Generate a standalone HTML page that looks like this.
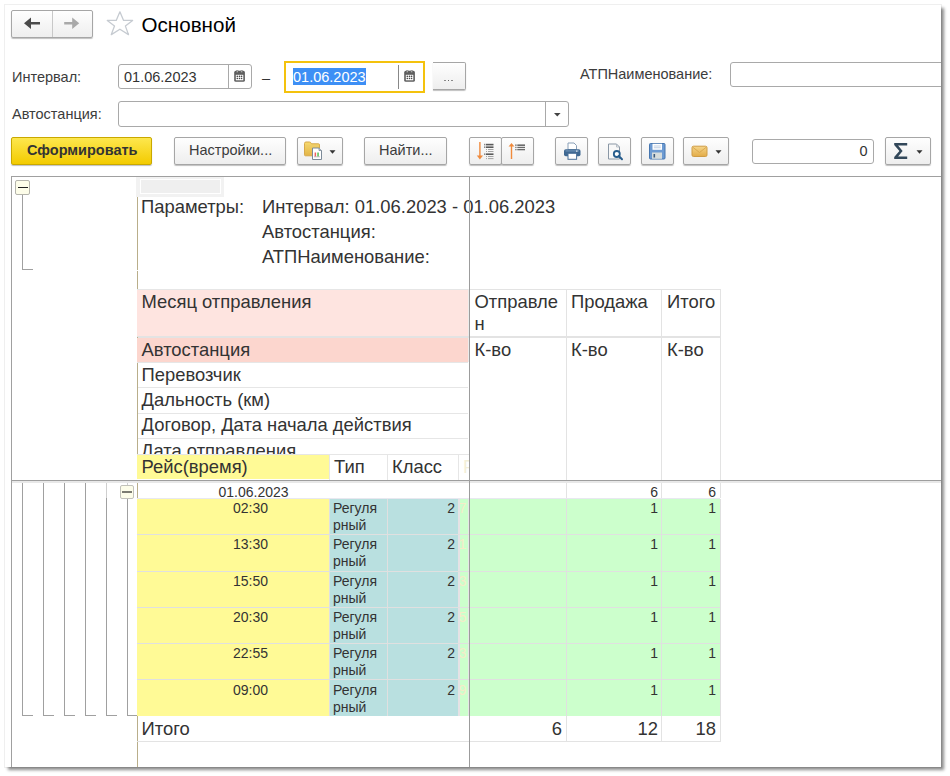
<!DOCTYPE html>
<html><head><meta charset="utf-8">
<style>
*{box-sizing:border-box}
html,body{margin:0;padding:0;width:950px;height:776px;overflow:hidden;background:#fff;font-family:"Liberation Sans",sans-serif;color:#333}
.a{position:absolute}
.t{position:absolute;white-space:nowrap;line-height:20px}
.win{position:absolute;left:5px;top:5px;width:936px;height:762px;background:#fff;box-shadow:0 0 0 1px rgba(0,0,0,.06),3px 3px 3px rgba(0,0,0,.45);overflow:hidden}
.btn{position:absolute;border:1px solid #a6a6a6;border-radius:2px;background:linear-gradient(#fefefe,#eeeeee);box-shadow:0 1px 1px rgba(0,0,0,.25)}
.inp{position:absolute;border:1px solid #a9a9a9;border-radius:3px;background:#fff}
.ui{font-size:14.5px;color:#3c3c3c}
.rep{font-size:18.4px;color:#333}
.sm{font-size:14px;color:#333}
</style></head><body>
<div class="win"><div class="a" style="left:-5px;top:-5px;width:950px;height:776px">

<!-- nav buttons -->
<div class="btn" style="left:11px;top:10px;width:82px;height:28px"></div>
<div class="a" style="left:52px;top:11px;width:1px;height:26px;background:#c8c8c8"></div>
<svg class="a" style="left:24px;top:17px" width="18" height="14" viewBox="0 0 18 14"><path d="M0 6.3 L7 0.5 V5.1 H16 V7.6 H7 V12.1 Z" fill="#4a4a4a"/></svg>
<svg class="a" style="left:63px;top:17px" width="18" height="14" viewBox="0 0 18 14"><path d="M16.2 6.3 L9.2 0.5 V5.1 H1.2 V7.6 H9.2 V12.1 Z" fill="#a9a9a9"/></svg>
<!-- star -->
<svg class="a" style="left:106px;top:10px" width="28" height="27" viewBox="0 0 28 27"><path d="M13.9 1.8 L17.6 10.4 L26.6 10.4 L19.4 16.1 L22.5 24.6 L13.9 19.2 L5.3 24.6 L8.5 16.1 L1.3 10.4 L10.2 10.4 Z" fill="none" stroke="#c6cbd1" stroke-width="1.3" stroke-linejoin="round"/></svg>
<div class="t" style="left:141.5px;top:15px;font-size:20.6px;color:#000">Основной</div>

<!-- row 1 -->
<div class="t ui" style="left:12px;top:67px">Интервал:</div>
<div class="inp" style="left:118px;top:64px;width:134px;height:25px"></div>
<div class="a" style="left:228px;top:65px;width:1px;height:23px;background:#a9a9a9"></div>
<div class="t ui" style="left:124px;top:67px;color:#333">01.06.2023</div>
<svg class="a" style="left:234px;top:70px" width="12" height="13" viewBox="0 0 12 13"><rect x="0.2" y="0.8" width="10.7" height="11" rx="1.6" fill="#5e5e5e"/><rect x="1.8" y="4.8" width="7.5" height="5.5" fill="#fff"/><g fill="#4a4a4a"><circle cx="3.3" cy="6.4" r=".8"/><circle cx="5.5" cy="6.4" r=".8"/><circle cx="7.6" cy="6.4" r=".8"/><circle cx="3.3" cy="8.5" r=".8"/><circle cx="5.5" cy="8.5" r=".8"/><circle cx="7.6" cy="8.5" r=".8"/></g><rect x="2.6" y="0" width="1.4" height="2.6" rx=".5" fill="#c8c8c8" stroke="#666" stroke-width=".5"/><rect x="6.9" y="0" width="1.4" height="2.6" rx=".5" fill="#c8c8c8" stroke="#666" stroke-width=".5"/></svg>
<div class="t ui" style="left:262px;top:68px;color:#333">–</div>

<div class="a" style="left:284px;top:61px;width:141px;height:32px;border:2px solid #f4c20d;background:#fff"></div>
<div class="a" style="left:398px;top:65px;width:1px;height:24px;background:#888"></div>
<div class="a" style="left:293px;top:68px;width:73px;height:17px;background:#3d8ff5"></div>
<div class="t ui" style="left:293px;top:67px;color:#fff">01.06.2023</div>
<svg class="a" style="left:404px;top:70px" width="12" height="13" viewBox="0 0 12 13"><rect x="0.2" y="0.8" width="10.7" height="11" rx="1.6" fill="#5e5e5e"/><rect x="1.8" y="4.8" width="7.5" height="5.5" fill="#fff"/><g fill="#4a4a4a"><circle cx="3.3" cy="6.4" r=".8"/><circle cx="5.5" cy="6.4" r=".8"/><circle cx="7.6" cy="6.4" r=".8"/><circle cx="3.3" cy="8.5" r=".8"/><circle cx="5.5" cy="8.5" r=".8"/><circle cx="7.6" cy="8.5" r=".8"/></g><rect x="2.6" y="0" width="1.4" height="2.6" rx=".5" fill="#c8c8c8" stroke="#666" stroke-width=".5"/><rect x="6.9" y="0" width="1.4" height="2.6" rx=".5" fill="#c8c8c8" stroke="#666" stroke-width=".5"/></svg>
<div class="btn" style="left:433px;top:62px;width:33px;height:28px;border-left:none;border-radius:0 2px 2px 0"></div>
<div class="a" style="left:444.3px;top:79.5px;width:1.6px;height:1.6px;background:#8a8a8a"></div><div class="a" style="left:447.8px;top:79.5px;width:1.6px;height:1.6px;background:#666"></div><div class="a" style="left:451.3px;top:79.5px;width:1.6px;height:1.6px;background:#8a8a8a"></div>

<div class="t ui" style="left:580px;top:64px">АТПНаименование:</div>
<div class="inp" style="left:730px;top:62px;width:230px;height:25px"></div>

<!-- row 2 -->
<div class="t ui" style="left:12px;top:104px">Автостанция:</div>
<div class="inp" style="left:118px;top:101px;width:451px;height:26px"></div>
<div class="a" style="left:545px;top:102px;width:1px;height:24px;background:#a9a9a9"></div>
<svg class="a" style="left:553.5px;top:112.5px" width="7" height="4" viewBox="0 0 7 4"><path d="M0 0 H6.6 L3.3 3.6 Z" fill="#444"/></svg>

<!-- toolbar -->
<div class="a" style="left:11px;top:137px;width:141px;height:28px;border:1px solid #c9a800;border-radius:2px;background:linear-gradient(#fde74e,#f3cb00);box-shadow:0 1px 1px rgba(0,0,0,.25)"></div>
<div class="t" style="left:27px;top:140px;font-size:14.5px;font-weight:bold;color:#333">Сформировать</div>

<div class="btn" style="left:174px;top:137px;width:112px;height:28px"></div>
<div class="t ui" style="left:189px;top:140px">Настройки...</div>

<div class="btn" style="left:297px;top:137px;width:46px;height:28px"></div>

<div class="btn" style="left:364px;top:137px;width:83px;height:28px"></div>
<div class="t ui" style="left:379px;top:140px">Найти...</div>

<div class="btn" style="left:469px;top:137px;width:33px;height:28px"></div>
<div class="btn" style="left:501px;top:137px;width:33px;height:28px"></div>

<div class="btn" style="left:555px;top:137px;width:33px;height:28px"></div>
<div class="btn" style="left:598px;top:137px;width:33px;height:28px"></div>
<div class="btn" style="left:641px;top:137px;width:33px;height:28px"></div>
<div class="btn" style="left:683px;top:137px;width:46px;height:28px"></div>

<div class="inp" style="left:752px;top:139px;width:122px;height:25px"></div>
<div class="t ui" style="left:859.5px;top:141px;color:#333">0</div>
<div class="btn" style="left:885px;top:137px;width:46px;height:28px"></div>



<!-- icons -->
<svg class="a" style="left:297px;top:137px" width="46" height="28" viewBox="0 0 46 28">
<defs><linearGradient id="fg" x1="0" y1="0" x2="0" y2="1"><stop offset="0" stop-color="#f7da6e"/><stop offset="1" stop-color="#e2b447"/></linearGradient></defs>
<path d="M7.5 6.5 Q7.5 5 9 5 H12.5 Q13.5 5 14 6 L14.5 6.8 H21.5 Q22.5 6.8 22.5 7.8 V17.8 Q22.5 18.8 21.5 18.8 H8.5 Q7.5 18.8 7.5 17.8 Z" fill="url(#fg)" stroke="#d6a84a" stroke-width="1"/>
<path d="M7.8 9 H22.2" stroke="#eccb6a" stroke-width="1"/>
<path d="M15.5 11 H22 L24.5 13.5 V22.5 H15.5 Z" fill="#fff" stroke="#7c8a98" stroke-width="1"/>
<path d="M22 11 V13.5 H24.5" fill="#c8d0d8" stroke="#7c8a98" stroke-width=".8"/>
<rect x="17.6" y="15.5" width="1.5" height="4" fill="#f06060"/><rect x="20.3" y="15.5" width="1.5" height="4" fill="#50c050"/>
<path d="M17 19.8 H23" stroke="#999" stroke-width=".6"/>
<path d="M32.5 13.3 H38.5 L35.5 16.8 Z" fill="#333"/>
</svg>
<svg class="a" style="left:469px;top:137px" width="33" height="28" viewBox="0 0 33 28">
<path d="M10.9 5 V19" stroke="#f08a3c" stroke-width="1.4"/>
<path d="M7.8 18.6 H14 L10.9 22.4 Z" fill="#f08a3c"/>
<g fill="#5a5a5a" transform="translate(-2,0)"><rect x="17.3" y="6.8" width="1" height="1.6"/><rect x="19" y="6.8" width="7.5" height="1.6"/><rect x="17.3" y="9.4" width="1" height="1.6"/><rect x="19" y="9.4" width="7.5" height="1.6"/><rect x="17.3" y="16.4" width="1" height="1.6"/><rect x="19" y="16.4" width="7.5" height="1.6"/></g>
<g fill="#9a9a9a" transform="translate(-2,0)"><rect x="19" y="12.1" width="1" height=".9"/><rect x="21" y="12.1" width="5.5" height=".9"/><rect x="19" y="14.1" width="1" height=".9"/><rect x="21" y="14.1" width="5.5" height=".9"/><rect x="19" y="19.1" width="1" height=".9"/><rect x="21" y="19.1" width="5.5" height=".9"/><rect x="19" y="21.2" width="1" height=".9"/><rect x="21" y="21.2" width="5.5" height=".9"/></g>
</svg>
<svg class="a" style="left:501px;top:137px" width="33" height="28" viewBox="0 0 33 28">
<path d="M10.5 9 V22" stroke="#f08a3c" stroke-width="1.4"/>
<path d="M7.6 9.6 H13.4 L10.5 6 Z" fill="#f08a3c"/>
<g fill="#4a4a4a"><rect x="14.3" y="7.5" width="1.2" height="1.3"/><rect x="16.3" y="7.5" width="7.7" height="1.3"/></g>
<g fill="#6a6a6a"><rect x="14.3" y="9.8" width="1.2" height="1.3"/><rect x="16.3" y="9.8" width="7.7" height="1.3"/><rect x="14.3" y="12" width="1.2" height="1.3"/><rect x="16.3" y="12" width="7.7" height="1.3"/></g>
</svg>
<svg class="a" style="left:555px;top:137px" width="33" height="28" viewBox="0 0 33 28">
<path d="M13 6 H19 L21.5 8.5 V12.5 H13 Z" fill="#fff" stroke="#8aa0b8" stroke-width="1"/>
<rect x="9" y="12.3" width="16.5" height="7" rx="1.8" fill="#3f6892"/>
<rect x="10.5" y="13.3" width="13.5" height="1.2" fill="#6d90b5"/>
<rect x="13" y="16.3" width="8.6" height="6" fill="#fff" stroke="#4b7199" stroke-width="1"/>
<rect x="21" y="13.6" width="1.5" height="1" fill="#fff"/>
</svg>
<svg class="a" style="left:598px;top:137px" width="33" height="28" viewBox="0 0 33 28">
<path d="M10.5 7 H18.5 L21.5 10 V22 H10.5 Z" fill="#f8f8f8" stroke="#8a97a5" stroke-width="1"/>
<path d="M18.5 7 V10 H21.5" fill="none" stroke="#a8b2bc" stroke-width=".8"/>
<circle cx="18.8" cy="17" r="3" fill="#fff" stroke="#265c8c" stroke-width="1.8"/>
<path d="M20.8 19 L24 22.3" stroke="#265c8c" stroke-width="2" stroke-linecap="round"/>
</svg>
<svg class="a" style="left:641px;top:137px" width="33" height="28" viewBox="0 0 33 28">
<rect x="8.5" y="6.5" width="15.5" height="15.5" rx="1" fill="#6c9ad2" stroke="#4676b0" stroke-width="1"/>
<rect x="11.5" y="6.8" width="9.5" height="6" fill="#fff"/>
<rect x="12.8" y="8.6" width="7" height=".8" fill="#b0c4dc"/><rect x="12.8" y="10.4" width="7" height=".8" fill="#b0c4dc"/>
<rect x="11" y="15.5" width="10" height="6.3" fill="#d6dcdc"/>
<rect x="12.5" y="17" width="1.6" height="3.5" fill="#3c5a7c"/>
</svg>
<svg class="a" style="left:683px;top:137px" width="46" height="28" viewBox="0 0 46 28">
<defs><linearGradient id="eg" x1="0" y1="0" x2="0" y2="1"><stop offset="0" stop-color="#f6d68a"/><stop offset="1" stop-color="#e2ab48"/></linearGradient></defs>
<rect x="9" y="9.2" width="15" height="10.3" rx="1.5" fill="url(#eg)" stroke="#cf9c45" stroke-width="1"/>
<path d="M9.5 10 L16.5 15.5 L23.5 10" fill="none" stroke="#d9a850" stroke-width="1"/>
<path d="M32.5 13.3 H38.5 L35.5 16.8 Z" fill="#333"/>
</svg>
<svg class="a" style="left:885px;top:137px" width="46" height="28" viewBox="0 0 46 28">
<path d="M9.2 6.1 H22.2 V8.4 H13.1 L17.6 14 L13.1 19.5 H22.2 V21.9 H9.2 V19.9 L14.4 14 L9.2 8 Z" fill="#33485a"/>
<path d="M31.5 13.3 H37.5 L34.5 16.8 Z" fill="#333"/>
</svg>

<!-- report frame -->
<div class="a" style="left:11px;top:176px;width:940px;height:600px;border-left:1px solid #a0a0a0;border-top:1px solid #a0a0a0"></div>
<!-- top tree -->
<div class="a" style="left:15px;top:180px;width:15px;height:15px;border:1px solid #b4b4ac;border-radius:2px;background:#fdfde9"></div>
<div class="a" style="left:17.5px;top:186.5px;width:10px;height:1.6px;background:#222"></div>
<div class="a" style="left:22px;top:195px;width:1px;height:75px;background:#a0a0a0"></div>
<div class="a" style="left:22px;top:269px;width:11px;height:1px;background:#a0a0a0"></div>
<!-- grey placeholder -->
<div class="a" style="left:136px;top:177px;width:88px;height:20px;background:#f2f2f2"></div>
<div class="a" style="left:140px;top:179px;width:81px;height:15px;border:1px solid #fff;background:#efefef"></div>
<!-- tan line -->
<div class="a" style="left:137px;top:197px;width:1px;height:73px;background:#b9ae8a"></div>
<div class="a" style="left:137px;top:271px;width:1px;height:18px;background:#b9ae8a"></div>
<div class="t rep" style="left:141px;top:197px">Параметры:</div>
<div class="t rep" style="left:262px;top:197px">Интервал: 01.06.2023 - 01.06.2023</div>
<div class="t rep" style="left:262px;top:222px">Автостанция:</div>
<div class="t rep" style="left:262px;top:247px">АТПНаименование:</div>

<!-- header table -->
<div class="a" style="left:137px;top:289px;width:331px;height:47px;background:#fee4e0;border-top:1px solid #e6e6e6"></div>
<div class="a" style="left:468px;top:289px;width:1px;height:73px;background:#ececec"></div>
<div class="a" style="left:137px;top:336px;width:583px;height:2px;background:#e3e3e3"></div>
<div class="a" style="left:137px;top:338px;width:331px;height:24px;background:#fcd6ce"></div>
<div class="t rep" style="left:141.5px;top:292px">Месяц отправления</div>
<div class="t rep" style="left:141.5px;top:340px">Автостанция</div>
<div class="a" style="left:137px;top:362px;width:331px;height:1px;background:#e6e6e6"></div>
<div class="a" style="left:137px;top:387px;width:331px;height:1px;background:#e6e6e6"></div>
<div class="a" style="left:137px;top:413px;width:331px;height:1px;background:#e6e6e6"></div>
<div class="a" style="left:137px;top:438px;width:331px;height:1px;background:#e6e6e6"></div>
<div class="a" style="left:137px;top:363px;width:1px;height:92px;background:#b9ae8a"></div>
<div class="a" style="left:137px;top:337px;width:1px;height:1px;background:#b9ae8a"></div>
<div class="t rep" style="left:141.5px;top:365px">Перевозчик</div>
<div class="t rep" style="left:141.5px;top:390px">Дальность (км)</div>
<div class="t rep" style="left:141.5px;top:414.5px">Договор, Дата начала действия</div>
<div class="a" style="left:137px;top:439px;width:332px;height:16px;overflow:hidden"><div class="t rep" style="left:4px;top:2px">Дата отправления</div></div>
<!-- Рейс row -->
<div class="a" style="left:137px;top:455px;width:192px;height:24px;background:#fffa96"></div>
<div class="a" style="left:329px;top:455px;width:140px;height:25px;background:#fff"></div>
<div class="a" style="left:329px;top:455px;width:1px;height:25px;background:#e6e6e6"></div>
<div class="a" style="left:387px;top:455px;width:1px;height:25px;background:#e6e6e6"></div>
<div class="a" style="left:458px;top:455px;width:1px;height:25px;background:#e6e6e6"></div>
<div class="a" style="left:137px;top:454px;width:332px;height:1px;background:#e6e6e6"></div>
<div class="t rep" style="left:141.5px;top:457px">Рейс(время)</div>
<div class="t rep" style="left:334px;top:457px">Тип</div>
<div class="t rep" style="left:392px;top:457px">Класс</div>
<div class="a" style="left:459px;top:455px;width:10px;height:25px;overflow:hidden"><div class="t rep" style="left:4px;top:2px;color:#f3efd8">Р</div></div>

<!-- right header columns -->
<div class="a" style="left:469px;top:289px;width:252px;height:1px;background:#e3e3e3"></div>
<div class="a" style="left:566px;top:289px;width:1px;height:191px;background:#e3e3e3"></div>
<div class="a" style="left:661px;top:289px;width:1px;height:191px;background:#e3e3e3"></div>
<div class="a" style="left:720px;top:289px;width:1px;height:191px;background:#e3e3e3"></div>
<div class="t rep" style="left:474.5px;top:292px">Отправле</div>
<div class="t rep" style="left:474.5px;top:314px">н</div>
<div class="t rep" style="left:571px;top:292px">Продажа</div>
<div class="t rep" style="left:667px;top:292px">Итого</div>
<div class="t rep" style="left:474.5px;top:340px">К-во</div>
<div class="t rep" style="left:571px;top:340px">К-во</div>
<div class="t rep" style="left:667px;top:340px">К-во</div>


<!-- data tree lines -->
<div class="a" style="left:22px;top:482px;width:1px;height:234px;background:#a0a0a0"></div>
<div class="a" style="left:43px;top:482px;width:1px;height:234px;background:#a0a0a0"></div>
<div class="a" style="left:64px;top:482px;width:1px;height:234px;background:#a0a0a0"></div>
<div class="a" style="left:85px;top:482px;width:1px;height:234px;background:#a0a0a0"></div>
<div class="a" style="left:106px;top:482px;width:1px;height:16px;background:#cfcfcf"></div>
<div class="a" style="left:106px;top:498px;width:1px;height:218px;background:#a0a0a0"></div>
<div class="a" style="left:127px;top:482px;width:1px;height:4px;background:#cfcfcf"></div>
<div class="a" style="left:127px;top:498px;width:1px;height:218px;background:#a0a0a0"></div>
<div class="a" style="left:22px;top:715px;width:11px;height:1px;background:#a0a0a0"></div>
<div class="a" style="left:43px;top:715px;width:11px;height:1px;background:#a0a0a0"></div>
<div class="a" style="left:64px;top:715px;width:11px;height:1px;background:#a0a0a0"></div>
<div class="a" style="left:85px;top:715px;width:11px;height:1px;background:#a0a0a0"></div>
<div class="a" style="left:106px;top:715px;width:11px;height:1px;background:#a0a0a0"></div>
<div class="a" style="left:127px;top:715px;width:10px;height:1px;background:#a0a0a0"></div>
<div class="a" style="left:120px;top:485px;width:14px;height:14px;border:1px solid #c2c2ba;border-radius:2px;background:#fdfde9"></div>
<div class="a" style="left:122px;top:491.3px;width:10px;height:1.5px;background:#7c7c72"></div>

<!-- date row -->
<div class="a" style="left:137px;top:483px;width:1px;height:15px;background:#b9ae8a"></div>
<div class="a" style="left:137px;top:498px;width:583px;height:1px;background:#e8e8f0"></div>
<div class="a" style="left:566px;top:482px;width:1px;height:16px;background:#e3e3e3"></div>
<div class="a" style="left:661px;top:482px;width:1px;height:16px;background:#e3e3e3"></div>
<div class="a" style="left:720px;top:482px;width:1px;height:16px;background:#e3e3e3"></div>
<div class="t sm" style="left:218.5px;top:482px">01.06.2023</div>
<div class="t sm" style="left:560px;top:482px;width:98px;text-align:right">6</div>
<div class="t sm" style="left:616px;top:482px;width:100px;text-align:right">6</div>

<!-- data rows -->
<div class="a" style="left:137px;top:499px;width:192px;height:217px;background:#fffa96"></div>
<div class="a" style="left:330px;top:499px;width:129px;height:217px;background:#b9e0e0"></div>
<div class="a" style="left:387px;top:499px;width:1px;height:217px;background:#e0e0e0"></div>
<div class="a" style="left:460px;top:499px;width:261px;height:217px;background:#ccffcc"></div>
<div class="a" style="left:468px;top:499px;width:1px;height:217px;background:#e6e6e6"></div>
<div class="a" style="left:566px;top:499px;width:1px;height:217px;background:#e0e0e0"></div>
<div class="a" style="left:661px;top:499px;width:1px;height:217px;background:#e0e0e0"></div>
<div class="a" style="left:720px;top:499px;width:1px;height:217px;background:#e0e0e0"></div>
<div class="a" style="left:458px;top:499px;width:2px;height:217px;background:#e5e2e5"></div>
<div class="a" style="left:329px;top:499px;width:1px;height:217px;background:#e0e0e0"></div>
<div class="t sm" style="left:233px;top:498px">02:30</div>
<div class="t sm" style="left:333px;top:498px;line-height:17px;padding-top:1.5px">Регуля<br>рный</div>
<div class="t sm" style="left:360px;top:498px;width:95px;text-align:right">2</div>
<div class="a" style="left:460px;top:499px;width:8px;height:20px;overflow:hidden"><div class="t sm" style="left:-1.5px;top:-1px;color:#f5ecc8">7</div></div>
<div class="t sm" style="left:560px;top:498px;width:98px;text-align:right">1</div>
<div class="t sm" style="left:616px;top:498px;width:100px;text-align:right">1</div>
<div class="a" style="left:137px;top:534px;width:584px;height:1px;background:#e0e0e0"></div>
<div class="t sm" style="left:233px;top:534px">13:30</div>
<div class="t sm" style="left:333px;top:534px;line-height:17px;padding-top:1.5px">Регуля<br>рный</div>
<div class="t sm" style="left:360px;top:534px;width:95px;text-align:right">2</div>
<div class="a" style="left:460px;top:535px;width:8px;height:20px;overflow:hidden"><div class="t sm" style="left:-1.5px;top:-1px;color:#f5ecc8">1</div></div>
<div class="t sm" style="left:560px;top:534px;width:98px;text-align:right">1</div>
<div class="t sm" style="left:616px;top:534px;width:100px;text-align:right">1</div>
<div class="a" style="left:137px;top:571px;width:584px;height:1px;background:#e0e0e0"></div>
<div class="t sm" style="left:233px;top:571px">15:50</div>
<div class="t sm" style="left:333px;top:571px;line-height:17px;padding-top:1.5px">Регуля<br>рный</div>
<div class="t sm" style="left:360px;top:571px;width:95px;text-align:right">2</div>
<div class="a" style="left:460px;top:572px;width:8px;height:20px;overflow:hidden"><div class="t sm" style="left:-1.5px;top:-1px;color:#f5ecc8">3</div></div>
<div class="t sm" style="left:560px;top:571px;width:98px;text-align:right">1</div>
<div class="t sm" style="left:616px;top:571px;width:100px;text-align:right">1</div>
<div class="a" style="left:137px;top:607px;width:584px;height:1px;background:#e0e0e0"></div>
<div class="t sm" style="left:233px;top:607px">20:30</div>
<div class="t sm" style="left:333px;top:607px;line-height:17px;padding-top:1.5px">Регуля<br>рный</div>
<div class="t sm" style="left:360px;top:607px;width:95px;text-align:right">2</div>
<div class="a" style="left:460px;top:608px;width:8px;height:20px;overflow:hidden"><div class="t sm" style="left:-1.5px;top:-1px;color:#f5ecc8">5</div></div>
<div class="t sm" style="left:560px;top:607px;width:98px;text-align:right">1</div>
<div class="t sm" style="left:616px;top:607px;width:100px;text-align:right">1</div>
<div class="a" style="left:137px;top:643px;width:584px;height:1px;background:#e0e0e0"></div>
<div class="t sm" style="left:233px;top:643px">22:55</div>
<div class="t sm" style="left:333px;top:643px;line-height:17px;padding-top:1.5px">Регуля<br>рный</div>
<div class="t sm" style="left:360px;top:643px;width:95px;text-align:right">2</div>
<div class="a" style="left:460px;top:644px;width:8px;height:20px;overflow:hidden"><div class="t sm" style="left:-1.5px;top:-1px;color:#f5ecc8">3</div></div>
<div class="t sm" style="left:560px;top:643px;width:98px;text-align:right">1</div>
<div class="t sm" style="left:616px;top:643px;width:100px;text-align:right">1</div>
<div class="a" style="left:137px;top:679px;width:584px;height:1px;background:#e0e0e0"></div>
<div class="t sm" style="left:233px;top:680px">09:00</div>
<div class="t sm" style="left:333px;top:680px;line-height:17px;padding-top:1.5px">Регуля<br>рный</div>
<div class="t sm" style="left:360px;top:680px;width:95px;text-align:right">2</div>
<div class="a" style="left:460px;top:681px;width:8px;height:20px;overflow:hidden"><div class="t sm" style="left:-1.5px;top:-1px;color:#f5ecc8">9</div></div>
<div class="t sm" style="left:560px;top:680px;width:98px;text-align:right">1</div>
<div class="t sm" style="left:616px;top:680px;width:100px;text-align:right">1</div>

<!-- totals -->
<div class="a" style="left:137px;top:716px;width:1px;height:60px;background:#b9ae8a"></div>
<div class="a" style="left:137px;top:741px;width:584px;height:1px;background:#e3e3e3"></div>
<div class="a" style="left:566px;top:716px;width:1px;height:26px;background:#e3e3e3"></div>
<div class="a" style="left:661px;top:716px;width:1px;height:26px;background:#e3e3e3"></div>
<div class="a" style="left:720px;top:716px;width:1px;height:26px;background:#e3e3e3"></div>
<div class="t rep" style="left:141.5px;top:719px">Итого</div>
<div class="t rep" style="left:460px;top:719px;width:102px;text-align:right">6</div>
<div class="t rep" style="left:556px;top:719px;width:102px;text-align:right">12</div>
<div class="t rep" style="left:614px;top:719px;width:102px;text-align:right">18</div>
<!-- split lines -->
<div class="a" style="left:12px;top:481px;width:940px;height:2px;background:#e8e8e8"></div>
<div class="a" style="left:469px;top:177px;width:1px;height:600px;background:#9c9c9c"></div>
<div class="a" style="left:12px;top:480px;width:940px;height:1px;background:#9e9e9e"></div>
</div></div>
</body></html>
